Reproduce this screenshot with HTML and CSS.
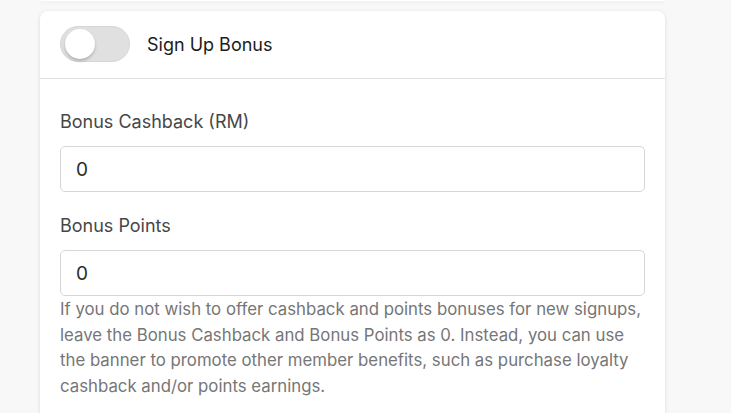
FILE: index.html
```html
<!DOCTYPE html>
<html lang="en">
<head>
<meta charset="utf-8">
<title>Sign Up Bonus</title>
<link rel="stylesheet" href="styles.css">
</head>
<body>
<div class="page">
  <div class="card card-prev"></div>
  <div class="card">
    <div class="card-header">
      <label class="switch">
        <input type="checkbox" class="switch-input">
        <span class="switch-track"><span class="switch-knob"></span></span>
      </label>
      <span class="card-title">Sign Up Bonus</span>
    </div>
    <div class="card-body">
      <div class="field">
        <label class="field-label" for="cashback">Bonus Cashback (RM)</label>
        <input id="cashback" class="field-input" type="text" value="0">
      </div>
      <div class="field">
        <label class="field-label" for="points">Bonus Points</label>
        <input id="points" class="field-input" type="text" value="0">
        <p class="help">If you do not wish to offer cashback and points bonuses for new signups, leave the Bonus Cashback and Bonus Points as 0. Instead, you can use the banner to promote other member benefits, such as purchase loyalty cashback and/or points earnings.</p>
      </div>
    </div>
  </div>
</div>
</body>
</html>
```

FILE: styles.css
```css
* { box-sizing: border-box; }
html, body { margin: 0; padding: 0; }
body {
  background: #f8f8f8;
  font-family: Inter, "Noto Sans", sans-serif;
  overflow: hidden;
}
.page {
  width: 625px;
  margin-left: 40px;
  display: flex;
  flex-direction: column;
  gap: 10px;
}
.card {
  background: #fff;
  border-radius: 8px;
  box-shadow: 0 1px 4px rgba(0,0,0,0.12);
}
.card-prev {
  height: 1px;
  border-radius: 0 0 8px 8px;
}
.card-header {
  display: flex;
  align-items: center;
  gap: 17px;
  padding: 15px 20px 16px;
  border-bottom: 1px solid #e2e2e2;
}
.switch { display: inline-flex; cursor: pointer; }
.switch-input { display: none; }
.switch-track {
  width: 70px;
  height: 36px;
  border-radius: 18px;
  background: #e0e0e0;
  border: 1px solid #d6d6d6;
  display: flex;
  align-items: center;
  padding-left: 4px;
}
.switch-knob {
  width: 30px;
  height: 30px;
  border-radius: 50%;
  background: #fff;
  box-shadow: 0 2px 3px rgba(0,0,0,0.22);
}
.card-title {
  font-size: 18px;
  color: #1c1c1c;
}
.card-body {
  padding: 29px 20px 20px;
  display: flex;
  flex-direction: column;
  gap: 20px;
}
.field { display: flex; flex-direction: column; }
.field-label {
  font-size: 18px;
  line-height: 27px;
  color: #474747;
  margin-bottom: 11px;
}
.field-input {
  width: 100%;
  height: 46px;
  border: 1px solid #d3d7dc;
  border-radius: 5px;
  padding: 0 15px;
  font-family: inherit;
  font-size: 19px;
  color: #2b2b2b;
  background: #fff;
  outline: none;
}
.help {
  margin: 1px 0 0;
  font-size: 16.8px;
  line-height: 25.7px;
  color: #767676;
}
```
